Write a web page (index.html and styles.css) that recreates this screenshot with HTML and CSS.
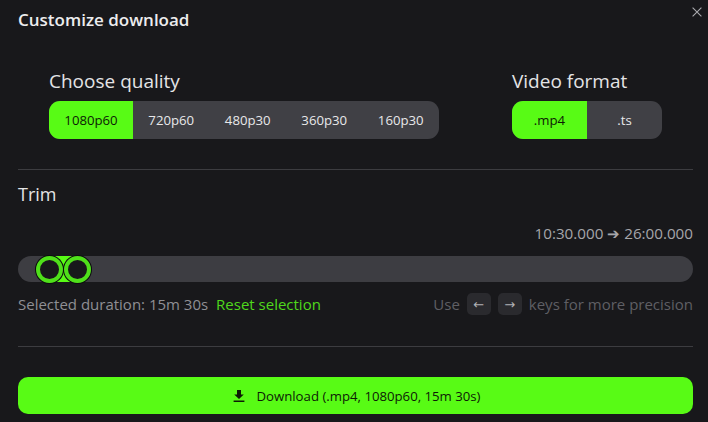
FILE: index.html
```html
<!DOCTYPE html>
<html lang="en">
<head>
<meta charset="utf-8">
<title>Customize download</title>
<link rel="stylesheet" href="styles.css">
</head>
<body>
<main class="dialog">
  <button class="close" aria-label="Close">
    <svg viewBox="0 0 10 10" width="10" height="10"><path d="M.6.6l8.8 8.8M9.4.6L.6 9.4" fill="none" stroke="#a9a9ae" stroke-width="1.1"/></svg>
  </button>
  <h1 class="title">Customize download</h1>
  <section class="options">
    <div class="group">
      <h2 class="group-label">Choose quality</h2>
      <div class="segments">
        <button class="seg seg-q1 active">1080p60</button>
        <button class="seg seg-q">720p60</button>
        <button class="seg seg-q">480p30</button>
        <button class="seg seg-q">360p30</button>
        <button class="seg seg-q">160p30</button>
      </div>
    </div>
    <div class="group">
      <h2 class="group-label">Video format</h2>
      <div class="segments">
        <button class="seg seg-f active">.mp4</button>
        <button class="seg seg-f">.ts</button>
      </div>
    </div>
  </section>
  <hr class="rule rule-top">
  <section class="trim">
    <h2 class="trim-label">Trim</h2>
    <div class="range">10:30.000 ➔ 26:00.000</div>
    <div class="track">
      <div class="fill"></div>
      <span class="thumb thumb-a"></span>
      <span class="thumb thumb-b"></span>
    </div>
    <div class="trim-info">
      <div class="duration">Selected duration: 15m 30s <a class="reset">Reset selection</a></div>
      <div class="hint">Use <kbd class="key">←</kbd> <kbd class="key">→</kbd> keys for more precision</div>
    </div>
  </section>
  <hr class="rule rule-bottom">
  <button class="download">
    <svg viewBox="0 0 12 12" width="12" height="12"><path d="M4 0h4v4.4h2.8L6 9 1.2 4.4H4zM.6 10.6h10.8V12H.6z" fill="#0d1a05"/></svg>
    <span>Download (.mp4, 1080p60, 15m 30s)</span>
  </button>
</main>
</body>
</html>
```
FILE: styles.css
```css
* { box-sizing: border-box; }
html, body { margin: 0; height: 100%; }
body {
  background: #18181b;
  color: #e8e8ea;
  font-family: "Open Sans", "Noto Sans", sans-serif;
  overflow: hidden;
}
button { font: inherit; border: 0; cursor: pointer; }
.dialog { position: relative; width: 708px; height: 422px; padding: 8px 15px 0 18px; }
.close {
  position: absolute; top: 7px; right: 6px;
  width: 10px; height: 10px; padding: 0; background: none; display: flex;
}
.title { margin: 0; font-size: 17px; line-height: 23px; font-weight: 600; color: #ececee; }
.options {
  display: flex; justify-content: space-between;
  margin-top: 37px; padding: 0 31px;
}
.group-label { margin: 0 0 7px; font-size: 19px; line-height: 26px; font-weight: 400; color: #e4e4e6; }
.segments { display: flex; height: 38px; border-radius: 11px; overflow: hidden; background: #404045; }
.seg { height: 38px; padding: 0; background: none; color: #e8e8ea; font-size: 13.2px; }
.seg-q1 { width: 84px; }
.seg-q { width: 76.5px; }
.seg-f { width: 75px; }
.seg.active { background: #58fb15; color: #0d1a05; }
.rule { margin: 0; border: 0; height: 1px; background: #3c3c40; }
.rule-top { margin-top: 30px; }
.trim { padding-top: 11px; }
.trim-label { margin: 0; font-size: 18px; line-height: 26px; font-weight: 400; color: #e4e4e6; }
.range { margin-top: 16px; text-align: right; font-size: 15.2px; line-height: 20px; color: #a6a6aa; }
.track { position: relative; height: 26px; margin-top: 13px; border-radius: 13px; background: #3d3d42; }
.fill { position: absolute; left: 31px; top: 0; width: 29px; height: 26px; background: #58fb15; }
.thumb {
  position: absolute; top: -0.5px; width: 27px; height: 27px; border-radius: 50%;
  background: #18181b; border: 4px solid #4fe01a; box-shadow: 0 0 0 1px #0c0c0e;
}
.thumb-a { left: 18px; }
.thumb-b { left: 46px; }
.trim-info { display: flex; justify-content: space-between; align-items: center; margin-top: 11px; height: 22px; }
.duration { font-size: 15px; color: #8f8f94; }
.reset { margin-left: 4px; color: #4fd81c; }
.hint { display: flex; align-items: center; gap: 7px; font-size: 15px; color: #5f5f64; }
.key {
  display: flex; align-items: center; justify-content: center;
  width: 24px; height: 22px; border-radius: 5px;
  background: #2a2a2e; color: #b0b0b4; font-family: "DejaVu Sans", sans-serif; font-size: 13px;
}
.rule-bottom { margin-top: 31px; }
.download {
  display: flex; align-items: center; justify-content: center; gap: 11px;
  width: 100%; height: 37px; margin-top: 30px; padding-left: 9px; border-radius: 10px;
  background: #58fb15; color: #0d1a05; font-size: 13.2px;
}
```
